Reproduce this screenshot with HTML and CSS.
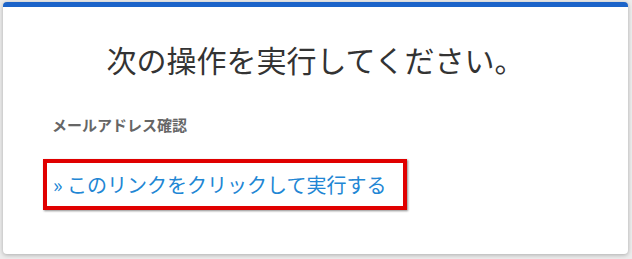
FILE: index.html
```html
<!DOCTYPE html>
<html lang="ja">
<head>
<meta charset="utf-8">
<link rel="stylesheet" href="styles.css">
</head>
<body>
<div class="card">
  <h1 class="title">次の操作を実行してください。</h1>
  <div class="section">
    <div class="label">メールアドレス確認</div>
    <div class="linkbox"><a class="link" href="#">» このリンクをクリックして実行する</a></div>
  </div>
</div>
</body>
</html>
```
FILE: styles.css
```css
html, body {
  margin: 0;
  padding: 0;
}
body {
  background: #ececec;
  width: 632px;
  height: 259px;
  overflow: hidden;
  font-family: "Noto Sans CJK JP", "Noto Sans", sans-serif;
}
.card {
  box-sizing: border-box;
  margin: 2px 4px 0 3px;
  width: 625px;
  height: 252px;
  background: #fff;
  border-top: 5px solid #1c64c9;
  border-radius: 4px;
  box-shadow: 0 1px 4px rgba(0, 0, 0, 0.28);
  display: flex;
  flex-direction: column;
}
.title {
  margin: 0;
  padding: 32px 0 0 0;
  font-size: 30px;
  font-weight: normal;
  line-height: 40px;
  color: #333;
  text-align: center;
}
.section {
  padding: 35px 0 0 40px;
  display: flex;
  flex-direction: column;
  align-items: flex-start;
}
.label {
  margin-left: 9px;
  font-size: 15px;
  font-weight: bold;
  color: #666;
  line-height: 22px;
}
.linkbox {
  margin-top: 23px;
  box-sizing: border-box;
  width: 364px;
  height: 51px;
  border: 4px solid #e00000;
  box-shadow: 1px 1px 2px rgba(0, 0, 0, 0.45);
  padding: 7px 0 0 6px;
}
.link {
  font-size: 20px;
  line-height: 30px;
  color: #2186d4;
  text-decoration: none;
  white-space: nowrap;
}
```
